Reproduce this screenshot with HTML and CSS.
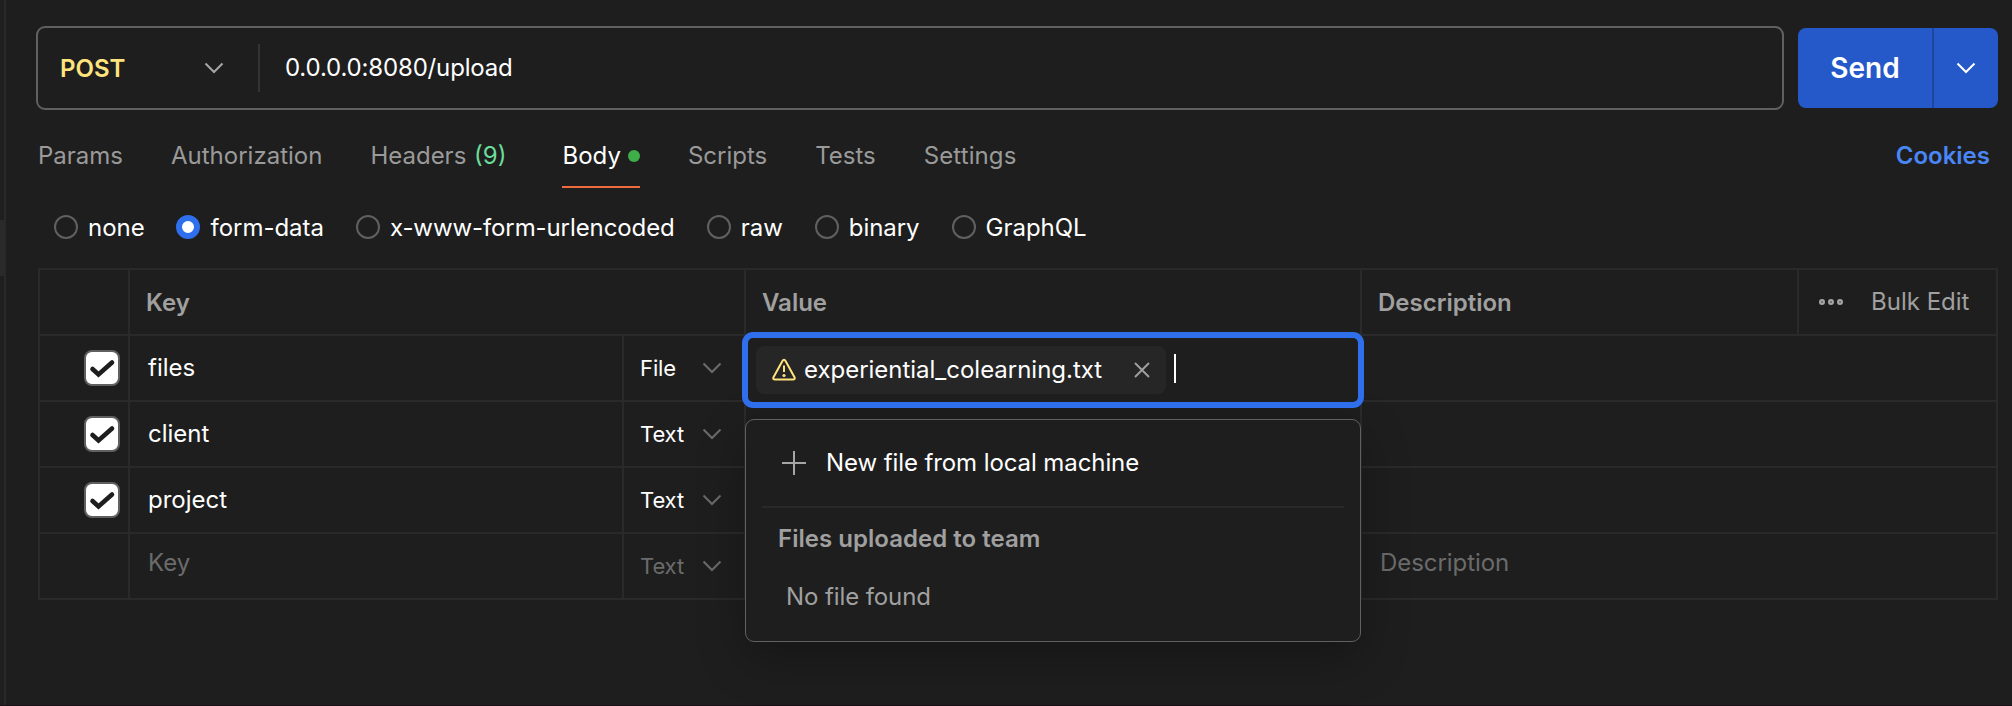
FILE: index.html
```html
<!DOCTYPE html>
<html lang="en">
<head>
<meta charset="utf-8">
<title>Request</title>
<link rel="stylesheet" href="styles.css">
</head>
<body>
<svg class="defs" width="0" height="0">
  <symbol id="chevron" viewBox="0 0 20 12"><path d="M1.5 1.5 10 10 18.500 1.500" fill="none" stroke="currentColor" stroke-width="2"/></symbol>
  <symbol id="check" viewBox="0 0 32 32"><path d="M6.500 17 12.500 22.500 26 10.500" fill="none" stroke="#1e1e1e" stroke-width="4.600" stroke-linecap="round"/></symbol>
</svg>
<div class="app">
  <aside class="rail"><div class="rail-thumb"></div></aside>
  <main class="panel">
    <div class="request">
      <div class="urlbar">
        <div class="method"><span class="t-post">POST</span><svg class="chev"><use href="#chevron"/></svg></div>
        <div class="url"><span class="t-url">0.0.0.0:8080/upload</span></div>
      </div>
      <div class="send">
        <div class="send-main"><span>Send</span></div>
        <div class="send-more"><svg class="chev"><use href="#chevron"/></svg></div>
      </div>
    </div>
    <nav class="tabs">
      <span class="tab">Params</span>
      <span class="tab">Authorization</span>
      <span class="tab headers">Headers <em>(9)</em></span>
      <span class="tab active">Body<i class="dot"></i></span>
      <span class="tab">Scripts</span>
      <span class="tab">Tests</span>
      <span class="tab settings">Settings</span>
      <span class="cookies">Cookies</span>
    </nav>
    <div class="modes">
      <label class="mode"><i class="radio"></i><span>none</span></label>
      <label class="mode selected"><i class="radio on"></i><span>form-data</span></label>
      <label class="mode"><i class="radio"></i><span class="long">x-www-form-urlencoded</span></label>
      <label class="mode"><i class="radio"></i><span>raw</span></label>
      <label class="mode"><i class="radio"></i><span>binary</span></label>
      <label class="mode"><i class="radio"></i><span>GraphQL</span></label>
    </div>
    <div class="table">
      <div class="row head">
        <div class="cell"></div>
        <div class="cell wide">Key</div>
        <div class="cell">Value</div>
        <div class="cell">Description</div>
        <div class="cell tools">
          <svg class="dots" width="24" height="6" viewBox="0 0 24 6"><g fill="none" stroke="currentColor" stroke-width="2.300"><circle cx="3" cy="3" r="1.850"/><circle cx="12" cy="3" r="1.850"/><circle cx="21" cy="3" r="1.850"/></g></svg>
          <span>Bulk Edit</span>
        </div>
      </div>
      <div class="row">
        <div class="cell pick"><i class="box"><svg><use href="#check"/></svg></i></div>
        <div class="cell key">files</div>
        <div class="cell type"><span>File</span><svg class="chev"><use href="#chevron"/></svg></div>
        <div class="cell value">
          <div class="focus">
            <div class="chip">
              <svg class="warn" width="24" height="24" viewBox="0 0 24 24"><path d="M10.300 3.200 1.500 19.200Q.600 21.500 3 21.500H21Q23.400 21.500 22.500 19.200L13.700 3.200Q12 .400 10.300 3.200Z" fill="none" stroke="currentColor" stroke-width="2" stroke-linejoin="round"/><path d="M12 7.500V14" stroke="currentColor" stroke-width="2"/><circle cx="12" cy="17.500" r="1.600" fill="currentColor"/></svg>
              <span class="fname">experiential_colearning.txt</span>
              <svg class="close" width="16" height="16" viewBox="0 0 16 16"><path d="M1 1 15 15M15 1 1 15" stroke="currentColor" stroke-width="1.900"/></svg>
            </div>
            <i class="caret"></i>
          </div>
          <div class="menu">
            <div class="new"><svg width="24" height="24" viewBox="0 0 24 24"><path d="M12 0V24M0 12H24" stroke="currentColor" stroke-width="2"/></svg><span>New file from local machine</span></div>
            <div class="menu-title">Files uploaded to team</div>
            <div class="menu-empty">No file found</div>
          </div>
        </div>
        <div class="cell desc"></div>
      </div>
      <div class="row">
        <div class="cell pick"><i class="box"><svg><use href="#check"/></svg></i></div>
        <div class="cell key">client</div>
        <div class="cell type"><span>Text</span><svg class="chev"><use href="#chevron"/></svg></div>
        <div class="cell value"></div>
        <div class="cell desc"></div>
      </div>
      <div class="row">
        <div class="cell pick"><i class="box"><svg><use href="#check"/></svg></i></div>
        <div class="cell key">project</div>
        <div class="cell type"><span>Text</span><svg class="chev"><use href="#chevron"/></svg></div>
        <div class="cell value"></div>
        <div class="cell desc"></div>
      </div>
      <div class="row blank">
        <div class="cell pick"></div>
        <div class="cell key">Key</div>
        <div class="cell type"><span>Text</span><svg class="chev"><use href="#chevron"/></svg></div>
        <div class="cell value"></div>
        <div class="cell desc">Description</div>
      </div>
    </div>
  </main>
</div>
</body>
</html>
```
FILE: styles.css
```css
* { box-sizing: border-box; }
body {
  margin: 0;
  background: #1e1e1e;
  color: #fff;
  font: 24px/32px Inter, "Liberation Sans", sans-serif;
  white-space: nowrap;
  overflow: hidden;
}
svg { display: block; flex: none; }
i, em { font-style: normal; }
.defs { position: absolute; }
.app { display: flex; height: 706px; border-bottom: 1px solid #171215; }
.rail { width: 6px; border-right: 2px solid #292929; padding-top: 220px; background: #1f1f1f; }
.rail-thumb { height: 56px; background: #2a2a2a; }
.panel { flex: 1; padding: 26px 14px 0 30px; }
.chev { width: 20px; height: 12px; color: #a6a6a6; }

.request { display: flex; gap: 14px; align-items: center; height: 84px; }
.urlbar {
  display: flex; align-items: center;
  width: 1748px; height: 84px;
  border: 2px solid #606060; border-radius: 9px;
}
.method {
  display: flex; align-items: center; justify-content: space-between;
  width: 222px; height: 48px; padding: 0 34px 0 22px;
  border-right: 2px solid #333;
  color: #ffe47e; font-weight: 600;
}
.t-post { padding-top: 2px; }
.url { padding-left: 25px; }
.t-url { letter-spacing: -.16px; }
.send {
  display: flex; width: 200px; height: 80px;
  border-radius: 8px; background: #2559ca; overflow: hidden;
  font-size: 28px; font-weight: 600;
}
.send-main { width: 136px; border-right: 2px solid #1e469c; display: flex; align-items: center; justify-content: center; }
.send-more { flex: 1; display: flex; align-items: center; justify-content: center; }
.send .chev { color: #fff; }

.tabs { display: flex; gap: 48px; height: 78px; padding: 30px 8px 0 2px; color: #9a9a9a; }
.tab { height: 48px; }
.tab em { color: #6bdd9a; margin-left: 1px; }
.headers { margin-right: 8px; }
.active { color: #fff; border-bottom: 2px solid #ee6b3b; display: flex; gap: 7px; }
.settings { letter-spacing: .1px; }
.dot { width: 12px; height: 12px; margin-top: 10px; border-radius: 50%; background: #3eae49; }
.cookies { margin-left: auto; color: #4a86f5; font-weight: 600; }

.modes { display: flex; gap: 32px; height: 80px; padding: 27px 0 0 18px; align-items: flex-start; }
.mode { display: flex; align-items: flex-start; gap: 10px; letter-spacing: -.04px; }
.selected { margin-left: -1px; gap: 11px; }
.mode .long { letter-spacing: -.09px; }
.mode span { margin-top: -3px; }
.radio { width: 24px; height: 24px; border: 2px solid #606060; border-radius: 50%; }
.radio.on { border: 6px solid #2f6fec; background: #fff; }

.table { width: 1960px; margin-left: 2px; border: 2px solid #2a2a2a; border-width: 2px 2px 0 2px; }
.row { display: grid; grid-template-columns: 90px 494px 122px 616px 1fr; height: 66px; border-bottom: 2px solid #2a2a2a; }
.cell { display: flex; align-items: center; border-right: 2px solid #2a2a2a; height: 64px; }
.cell:last-child { border-right: 0; }
.head { grid-template-columns: 90px 616px 616px 437px 1fr; color: #a0a0a0; font-weight: 600; }
.head .cell { padding: 2px 0 0 16px; }
.head .tools { padding: 0 0 0 20px; font-weight: 400; gap: 28px; }
.tools .dots { color: #a6a6a6; }
.pick { justify-content: flex-end; padding-right: 8px; }
.box { width: 36px; height: 36px; background: #fff; border: 2px solid #606060; border-radius: 8px; }
.box svg { width: 32px; height: 32px; }
.key { padding: 0 0 0 18px; }
.type { justify-content: space-between; padding: 0 22px 0 16px; font-size: 22px; }
.type span { letter-spacing: -.1px; }
.type .chev { color: #6b6b6b; }
.desc { padding-left: 18px; letter-spacing: -.06px; }
.blank { color: #6b6b6b; }
.blank .key, .blank .desc { padding-bottom: 6px; }
.value { position: relative; }

.focus {
  position: absolute; left: -4px; top: -4px; z-index: 3;
  display: flex; align-items: center;
  width: 622px; height: 76px; padding-left: 8px;
  border: 6px solid #2f6fec; border-radius: 11px; background: #1e1e1e;
}
.chip {
  display: flex; align-items: center;
  width: 410px; height: 48px; padding: 0 16px;
  border-radius: 8px; background: #262626;
}
.warn { color: #ffe47e; margin-right: 8px; }
.fname { letter-spacing: -.02px; }
.close { margin-left: auto; color: #a0a0a0; }
.caret { width: 2px; height: 29px; margin: 0 0 3px 8px; background: #fff; }
.menu {
  position: absolute; left: -1px; top: 83px; z-index: 2;
  width: 616px; height: 223px; padding: 15px 16px 0 16px;
  border: 1px solid #606060; border-radius: 9px; background: #1e1e1e;
  box-shadow: 0 16px 48px rgba(0, 0, 0, .28);
}
.new { display: flex; align-items: center; gap: 20px; height: 73px; padding: 0 0 15px 20px; border-bottom: 2px solid #2a2a2a; letter-spacing: -.09px; }
.new svg { color: #a6a6a6; }
.menu-title { margin: 15px 0 0 16px; color: #a0a0a0; font-weight: 600; letter-spacing: .03px; }
.menu-empty { margin: 26px 0 0 24px; color: #a0a0a0; letter-spacing: -.1px; }
```
